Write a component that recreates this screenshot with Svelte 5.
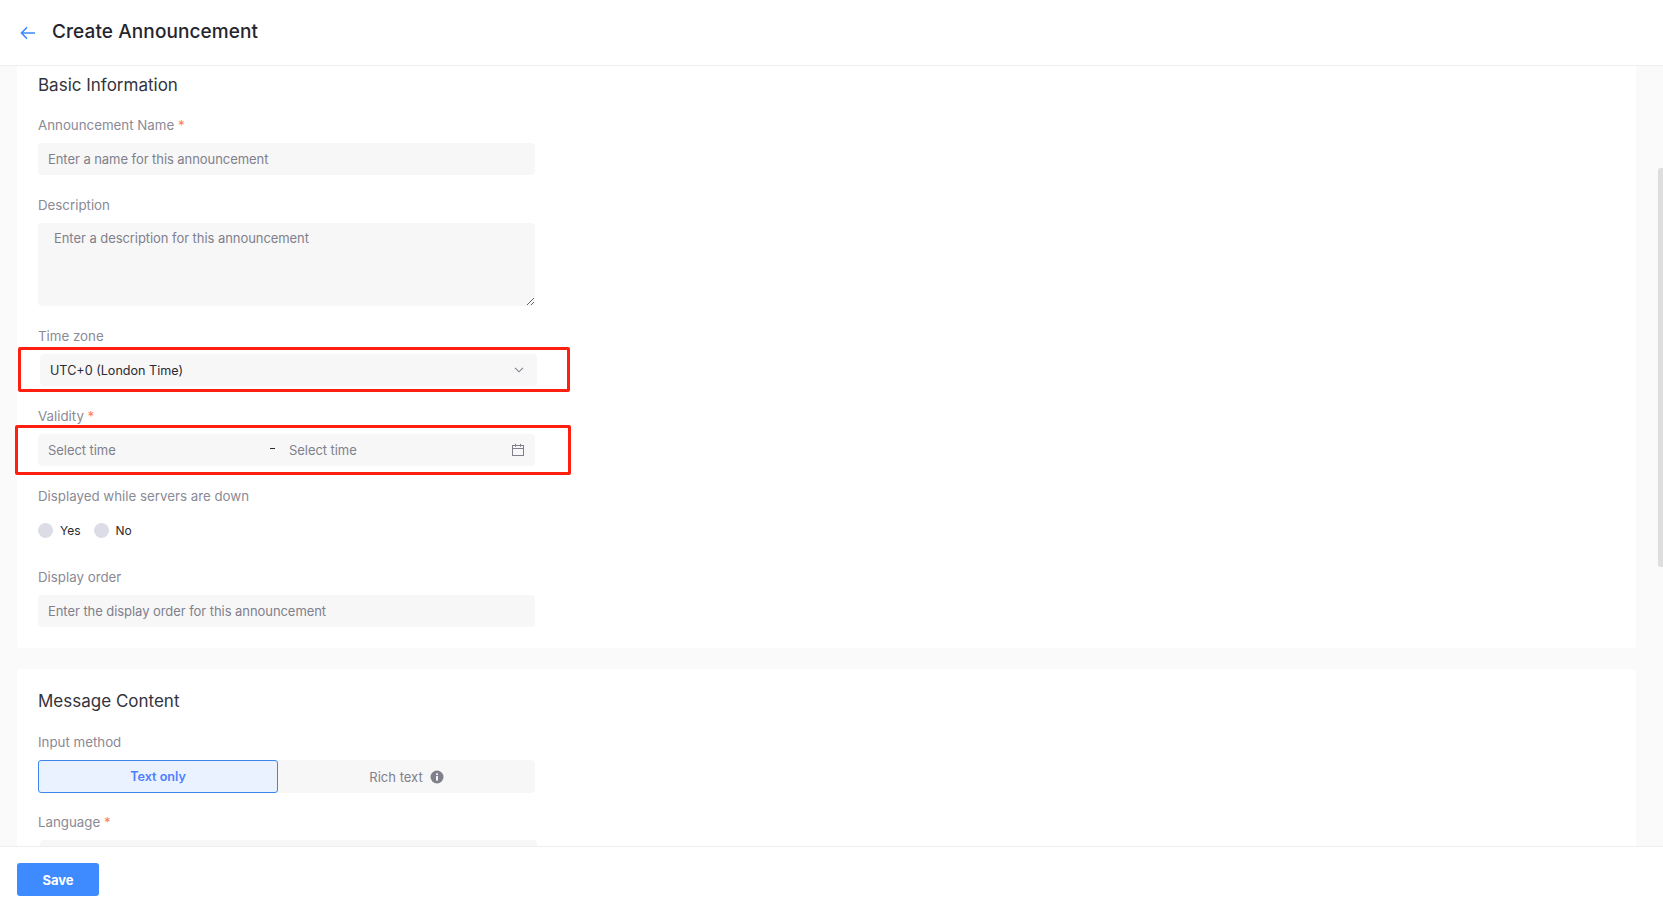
<script lang="ts">
	let inputMethod = $state('text');
	let showOnDown = $state('');
</script>

<div class="page">
	<header class="topbar">
		<button class="back" aria-label="Back">
			<svg width="16" height="14" viewBox="0 0 16 14" fill="none" stroke="#3d8bff" stroke-width="1.5">
				<path d="M15 7H1.6M7 1.4 1.4 7 7 12.6" />
			</svg>
		</button>
		<h1>Create Announcement</h1>
	</header>

	<main class="content">
		<section class="card first">
			<h2>Basic Information</h2>

			<div class="field">
				<div class="label">Announcement Name <span class="req">*</span></div>
				<input class="input" placeholder="Enter a name for this announcement" />
			</div>

			<div class="field">
				<div class="label">Description</div>
				<textarea class="input area" placeholder="Enter a description for this announcement"></textarea>
			</div>

			<div class="field">
				<div class="label">Time zone</div>
				<div class="control select">
					<span class="value">UTC+0 (London Time)</span>
					<svg width="10" height="6" viewBox="0 0 10 6" fill="none" stroke="#80808c" stroke-width="1.1">
						<path d="M1 .8 5 4.8 9 .8" />
					</svg>
					<div class="mark mark-zone"></div>
				</div>
			</div>

			<div class="field">
				<div class="label">Validity <span class="req">*</span></div>
				<div class="control range">
					<input class="range-input" placeholder="Select time" />
					<span class="dash"></span>
					<input class="range-input end" placeholder="Select time" />
					<svg width="14" height="14" viewBox="0 0 14 14" fill="none" stroke="#80808c" stroke-width="1">
						<rect x="1.5" y="2.5" width="11" height="10" />
						<path d="M1.5 5.5h11M4.5 .8v3M9.5 .8v3" />
					</svg>
					<div class="mark mark-validity"></div>
				</div>
			</div>

			<div class="field">
				<div class="label">Displayed while servers are down</div>
				<div class="radios">
					<label class="radio">
						<input type="radio" name="down" value="yes" bind:group={showOnDown} />
						<span>Yes</span>
					</label>
					<label class="radio">
						<input type="radio" name="down" value="no" bind:group={showOnDown} />
						<span>No</span>
					</label>
				</div>
			</div>

			<div class="field">
				<div class="label">Display order</div>
				<input class="input" placeholder="Enter the display order for this announcement" />
			</div>
		</section>

		<section class="card second">
			<h2>Message Content</h2>

			<div class="field">
				<div class="label">Input method</div>
				<div class="segments">
					<button class="seg" class:active={inputMethod === 'text'} onclick={() => (inputMethod = 'text')}>Text only</button>
					<button class="seg rich" class:active={inputMethod === 'rich'} onclick={() => (inputMethod = 'rich')}>
						Rich text
						<svg width="14" height="14" viewBox="0 0 14 14">
							<circle cx="7" cy="7" r="6.5" fill="#80808c" />
							<rect x="6.1" y="6" width="1.8" height="4.6" fill="#fff" />
							<rect x="6.1" y="3.4" width="1.8" height="1.7" fill="#fff" />
						</svg>
					</button>
				</div>
			</div>

			<div class="field language">
				<div class="label">Language <span class="req">*</span></div>
				<div class="control select"></div>
			</div>
		</section>
	</main>

	<footer class="footer">
		<button class="save">Save</button>
	</footer>

	<div class="thumb"></div>
</div>

<style>
	:global(body) {
		background: #fafafa;
		font-family: Inter, "Open Sans", sans-serif;
		color: #2a2a33;
	}
	.page {
		height: 911px;
		display: flex;
		flex-direction: column;
		position: relative;
		overflow: hidden;
	}
	.topbar {
		height: 65px;
		flex: none;
		background: #fff;
		border-bottom: 1px solid #eeeeee;
		display: flex;
		align-items: center;
		padding-left: 20px;
		gap: 16px;
	}
	.back {
		background: none;
		border: none;
		padding: 0;
		display: flex;
		margin-top: 1px;
	}
	h1 {
		margin: 0 0 2px;
		font-size: 19px;
		letter-spacing: 0.1px;
		font-weight: 500;
		color: #25252d;
	}
	.content {
		flex: 1;
		min-height: 0;
		overflow: hidden;
		padding: 0 27px 0 17px;
	}
	.card {
		background: #fff;
		border-radius: 4px;
		padding: 20px 21px 21px;
		margin-bottom: 21px;
	}
	.card.first {
		padding-top: 7px;
		border-radius: 0 0 4px 4px;
	}
	h2 {
		margin: 0 0 18px;
		height: 24px;
		line-height: 24px;
		font-size: 17px;
		font-weight: 400;
		color: #33333d;
	}
	.card.second h2 {
		margin-bottom: 19px;
	}
	.field {
		margin-top: 20px;
		width: 497px;
	}
	h2 + .field {
		margin-top: 0;
	}
	.field.language {
		margin-top: 19px;
	}
	.label {
		height: 20px;
		line-height: 20px;
		margin-bottom: 8px;
		font-size: 13.3px;
		color: #8a8a96;
	}
	.req {
		color: #ff7a66;
	}
	.input {
		display: block;
		box-sizing: border-box;
		width: 100%;
		height: 32px;
		border: none;
		outline: none;
		border-radius: 4px;
		background: #f7f7f7;
		padding: 0 10px;
		font: 13px Inter, sans-serif;
		letter-spacing: -0.06px;
		color: #2a2a33;
	}
	.input::placeholder,
	.range-input::placeholder {
		color: #80808c;
		opacity: 1;
	}
	.area {
		height: 83px;
		padding: 6px 16px;
		line-height: 18px;
		resize: vertical;
	}
	.control {
		position: relative;
		box-sizing: border-box;
		height: 32px;
		border-radius: 4px;
		background: #f7f7f7;
		display: flex;
		align-items: center;
	}
	.select {
		margin: 1px -2px 0 2px;
		padding: 0 13px 0 10px;
		justify-content: space-between;
		font-size: 12.6px;
		color: #2a2a33;
	}
	.range {
		padding: 0 10px;
	}
	.range-input {
		width: 222px;
		flex: none;
		border: none;
		outline: none;
		background: none;
		padding: 0;
		font: 13px Inter, sans-serif;
		letter-spacing: -0.06px;
		color: #2a2a33;
	}
	.dash {
		width: 5px;
		height: 1px;
		background: #2a2a33;
		margin: -4px 14px 0 0;
		flex: none;
	}
	.mark {
		position: absolute;
		border: 3px solid #ff1f10;
		border-radius: 2px;
		pointer-events: none;
	}
	.mark-zone {
		inset: -7px -33px -6px -22px;
	}
	.mark-validity {
		inset: -9px -36px -9px -23px;
	}
	.radios {
		height: 33px;
		display: flex;
		align-items: center;
		gap: 13px;
	}
	.radio {
		display: flex;
		align-items: center;
		gap: 7px;
		font-size: 12px;
		color: #2a2a33;
	}
	.radio input {
		appearance: none;
		width: 15px;
		height: 15px;
		margin: 0;
		border-radius: 50%;
		background: #dcdce6;
	}
	.radio input:checked {
		background: #3d8bff;
	}
	.segments {
		display: flex;
		height: 33px;
		border-radius: 4px;
		background: #f7f7f7;
	}
	.seg {
		box-sizing: border-box;
		border: 1px solid transparent;
		border-radius: 3px;
		background: none;
		padding: 0;
		font: 13px Inter, sans-serif;
		color: #80808c;
		display: flex;
		align-items: center;
		justify-content: center;
		gap: 7px;
		width: 240px;
		flex: none;
	}
	.seg.rich {
		flex: 1;
		width: auto;
	}
	.seg.active {
		background: #eaf2ff;
		border-color: #3d85ee;
		color: #4d7fff;
		font-size: 12.6px;
		font-weight: 600;
	}
	.footer {
		height: 65px;
		flex: none;
		box-sizing: border-box;
		background: #fff;
		border-top: 1px solid #eeeeee;
		padding: 16px 17px;
	}
	.save {
		display: block;
		width: 82px;
		height: 33px;
		border: none;
		border-radius: 3px;
		background: #3d8bff;
		color: #fff;
		font: 700 13px Inter, sans-serif;
	}
	.thumb {
		position: absolute;
		top: 168px;
		right: 0;
		width: 5px;
		height: 399px;
		border-radius: 3px 0 0 3px;
		background: #dedede;
	}
</style>
